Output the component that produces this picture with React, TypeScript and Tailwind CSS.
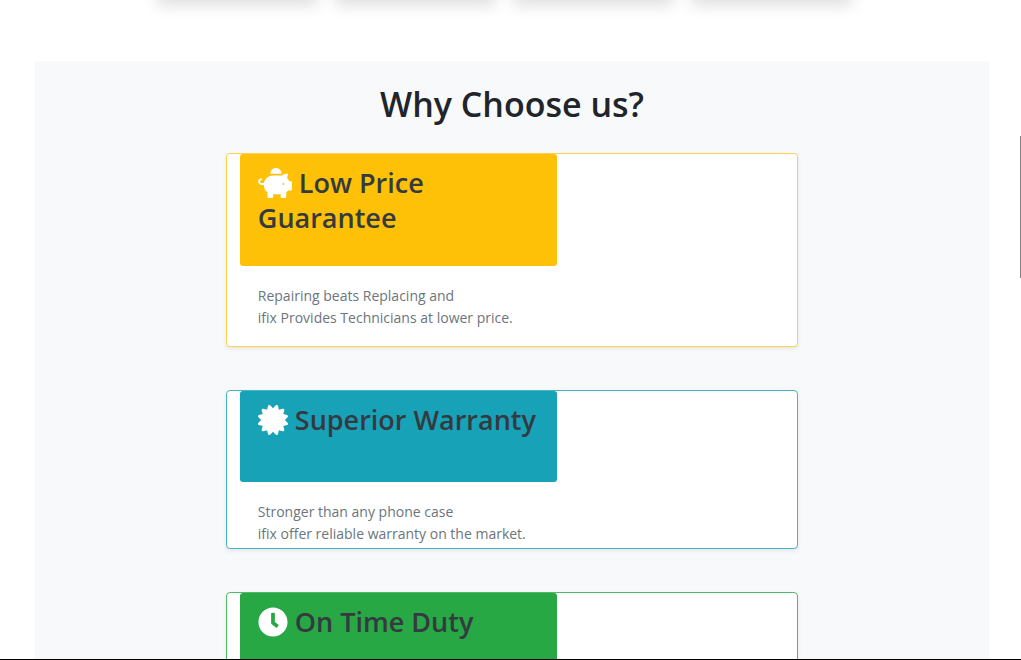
import type { IconType } from "react-icons";
import { FaCertificate, FaClock, FaPiggyBank } from "react-icons/fa";

type Feature = {
  title: string;
  lines: string[];
  icon: IconType;
  iconWidth: string;
  border: string;
  fill: string;
  headerBottom: string;
  bottom: string;
};

const features: Feature[] = [
  {
    title: "Low Price Guarantee",
    lines: ["Repairing beats Replacing and", "ifix Provides Technicians at lower price."],
    icon: FaPiggyBank,
    iconWidth: "w-[34px]",
    border: "border-[#ffd24d]",
    fill: "bg-[#ffc107]",
    headerBottom: "pb-[31px]",
    bottom: "pb-[17px]",
  },
  {
    title: "Superior Warranty",
    lines: ["Stronger than any phone case", "ifix offer reliable warranty on the market."],
    icon: FaCertificate,
    iconWidth: "w-[30px]",
    border: "border-[#45b4c6]",
    fill: "bg-[#17a2b8]",
    headerBottom: "pb-[45px]",
    bottom: "pb-[3px]",
  },
  {
    title: "On Time Duty",
    lines: [],
    icon: FaClock,
    iconWidth: "w-[30px]",
    border: "border-[#53b96a]",
    fill: "bg-[#28a745]",
    headerBottom: "pb-[45px]",
    bottom: "pb-[3px]",
  },
];

function FeatureCard({ feature }: { feature: Feature }) {
  const Icon = feature.icon;
  return (
    <article
      className={`w-3/5 rounded-[4px] border bg-white px-[13px] shadow-[0_2px_4px_rgba(0,0,0,0.075)] ${feature.border} ${feature.bottom}`}
    >
      <header className={`w-[317px] max-w-full rounded-[3px] px-[18px] pt-[11px] ${feature.fill} ${feature.headerBottom}`}>
        <h2 className="text-[27px] leading-[35px] font-semibold text-[#343a40]">
          <Icon className={`mr-[7px] inline-block h-[30px] align-[-5px] text-white ${feature.iconWidth}`} aria-hidden="true" />
          {feature.title}
        </h2>
      </header>
      <p className="px-[18px] pt-[19px] text-[14px] leading-[22px] text-[#6c757d]">
        {feature.lines.map((line) => (
          <span key={line} className="block">
            {line}
          </span>
        ))}
      </p>
    </article>
  );
}

export default function App() {
  return (
    <div className="relative flex h-screen flex-col overflow-hidden border-b border-black bg-white font-['Open_Sans','Noto_Sans',sans-serif]">
      <div className="flex h-[61px] shrink-0 items-end justify-center overflow-hidden pr-3 pb-[61px]">
        <div className="flex gap-[17px]">
          {[0, 1, 2, 3].map((n) => (
            <div key={n} className="h-40 w-[161px] bg-white shadow-[0_6px_14px_rgba(0,0,0,0.12)]" />
          ))}
        </div>
      </div>
      <main className="mr-8 ml-[35px] flex grow flex-col items-center bg-[#f8f9fa] pt-[22px]">
        <h1 className="mb-[27px] text-[34px] leading-[43px] font-semibold text-[#212529]">Why Choose us?</h1>
        <div className="flex w-full flex-col items-center gap-[43px]">
          {features.map((feature) => (
            <FeatureCard key={feature.title} feature={feature} />
          ))}
        </div>
      </main>
      <div className="absolute top-[136px] right-0 h-[142px] w-px bg-[#808080]" />
    </div>
  );
}
